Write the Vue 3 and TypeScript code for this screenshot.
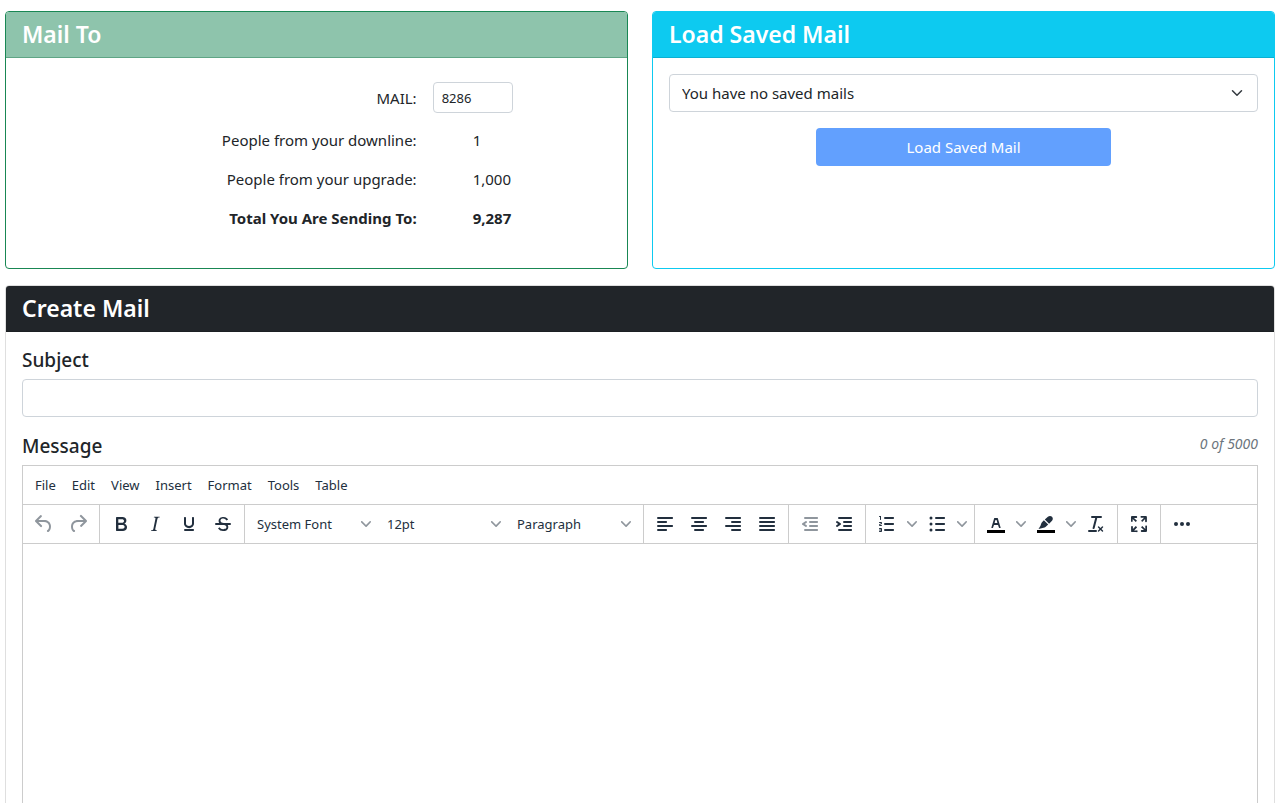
<script setup lang="ts">
import { computed, ref } from 'vue'

interface Tool {
  label: string
  shapes: string[]
  swatch?: boolean
  disabled?: boolean
  split?: boolean
}

interface Picker {
  label: string
  value: string
}

const mailCount = ref('8286')
const downline = 1
const upgrade = 1000
const subject = ref('')
const message = ref('')

const total = computed(() => (Number(mailCount.value) || 0) + downline + upgrade)
const format = (value: number): string => value.toLocaleString('en-US')

const menus: string[] = ['File', 'Edit', 'View', 'Insert', 'Format', 'Tools', 'Table']

const pickers: Picker[] = [
  { label: 'Font family', value: 'System Font' },
  { label: 'Font size', value: '12pt' },
  { label: 'Block format', value: 'Paragraph' },
]

const bar = (x: number, y: number, width: number): string =>
  `M${x} ${y}h${width}c.6 0 1 .4 1 1s-.4 1-1 1H${x}a1 1 0 110-2z`

const dot = (x: number, y: number, r: number): string =>
  `M${x - r} ${y}a${r} ${r} 0 1 0 ${r * 2} 0a${r} ${r} 0 1 0 ${-r * 2} 0z`

const leadGroups: Tool[][] = [
  [
    {
      label: 'Undo',
      disabled: true,
      shapes: ['M6.4 8H12c3.7 0 6.2 2 6.8 5.1.6 2.7-.4 5.6-2.3 6.8a1 1 0 01-1-1.8c1.1-.6 1.8-2.7 1.4-4.6-.5-2.1-2.1-3.5-4.9-3.5H6.4l3.3 3.3a1 1 0 11-1.4 1.4l-5-5a1 1 0 010-1.4l5-5a1 1 0 011.4 1.4L6.4 8z'],
    },
    {
      label: 'Redo',
      disabled: true,
      shapes: ['M17.6 10H12c-2.8 0-4.4 1.4-4.9 3.5-.4 2 .3 4 1.4 4.6a1 1 0 11-1 1.8c-2-1.2-2.9-4.1-2.3-6.8.6-3 3-5.1 6.8-5.1h5.6l-3.3-3.3a1 1 0 111.4-1.4l5 5a1 1 0 010 1.4l-5 5a1 1 0 01-1.4-1.4l3.3-3.3z'],
    },
  ],
  [
    {
      label: 'Bold',
      shapes: ['M7.8 19c-.3 0-.5 0-.6-.2l-.2-.5V5.7c0-.2 0-.4.2-.5l.6-.2h5c1.5 0 2.7.3 3.5 1 .7.6 1.1 1.4 1.1 2.5a3 3 0 01-.6 1.9c-.4.6-1 1-1.6 1.2.4.1.9.3 1.3.6s.8.7 1 1.2c.4.4.5 1 .5 1.6 0 1.3-.4 2.3-1.3 3-.8.7-2.1 1-3.8 1H7.8zm5-8.3c.6 0 1.2-.1 1.6-.5.4-.3.6-.7.6-1.3 0-1.1-.8-1.7-2.3-1.7H9.3v3.5h3.4zm.5 6c.7 0 1.3-.1 1.7-.4.4-.4.6-.9.6-1.5s-.2-1-.7-1.4c-.4-.3-1-.4-2-.4H9.4v3.8h4z'],
    },
    {
      label: 'Italic',
      shapes: ['M16.7 4.7l-.1.9h-.3c-.6 0-1 0-1.4.3-.3.3-.4.6-.5 1.1l-2.1 9.8v.6c0 .5.4.8 1.4.8h.2l-.2.8H8l.2-.8h.2c1.1 0 1.8-.5 2-1.5l2-9.8.1-.5c0-.6-.4-.8-1.4-.8h-.3l.2-.9h5.8z'],
    },
    {
      label: 'Underline',
      shapes: ['M16 5c.6 0 1 .4 1 1v5.5a4 4 0 01-.4 1.8l-1 1.4a5.3 5.3 0 01-5.5 1 5 5 0 01-1.6-1c-.5-.4-.8-.9-1.1-1.4a4 4 0 01-.4-1.8V6c0-.6.4-1 1-1s1 .4 1 1v5.5c0 .3 0 .6.2 1l.6.7a3.3 3.3 0 002.2.8 3.4 3.4 0 002.2-.8c.3-.2.4-.5.6-.8l.2-.9V6c0-.6.4-1 1-1zM8 17h8c.6 0 1 .4 1 1s-.4 1-1 1H8a1 1 0 010-2z'],
    },
    {
      label: 'Strikethrough',
      shapes: [
        'M15.6 8.5c-.5-.7-1-1.1-1.3-1.3-.6-.4-1.3-.6-2-.6-2.7 0-2.8 1.7-2.8 2.1 0 1.6 1.8 2 3.2 2.3 4.4.9 4.6 2.8 4.6 3.9 0 1.4-.7 4.1-5 4.1A6.2 6.2 0 017 16.4l1.5-1.1c.4.6 1.6 2 3.7 2 1.6 0 2.5-.4 3-1.2.4-.8.3-2-.8-2.6-.7-.4-1.6-.7-2.9-1-1-.2-3.9-.8-3.9-3.6C7.6 6 10.3 5 12.4 5c2.9 0 4.2 1.6 4.7 2.4l-1.5 1.1z',
        'M5 11h14a1 1 0 010 2H5a1 1 0 010-2z',
      ],
    },
  ],
]

const toolGroups: Tool[][] = [
  [
    { label: 'Align left', shapes: [bar(5, 5, 14), bar(5, 9, 8), bar(5, 13, 14), bar(5, 17, 8)] },
    { label: 'Align center', shapes: [bar(5, 5, 14), bar(8, 9, 8), bar(5, 13, 14), bar(8, 17, 8)] },
    { label: 'Align right', shapes: [bar(5, 5, 14), bar(11, 9, 8), bar(5, 13, 14), bar(11, 17, 8)] },
    { label: 'Justify', shapes: [bar(5, 5, 14), bar(5, 9, 14), bar(5, 13, 14), bar(5, 17, 14)] },
  ],
  [
    {
      label: 'Decrease indent',
      disabled: true,
      shapes: [bar(7, 5, 12), bar(12, 9, 7), bar(12, 13, 7), bar(7, 17, 12), 'M8.6 13.2a1 1 0 01-1.2 1.6l-3-2a1 1 0 010-1.6l3-2a1 1 0 011.2 1.6L6.8 12l1.8 1.2z'],
    },
    {
      label: 'Increase indent',
      shapes: [bar(7, 5, 12), bar(12, 9, 7), bar(12, 13, 7), bar(7, 17, 12), 'M4.4 13.2L6.2 12l-1.8-1.2a1 1 0 011.2-1.6l3 2a1 1 0 010 1.6l-3 2a1 1 0 11-1.2-1.6z'],
    },
  ],
  [
    {
      label: 'Numbered list',
      split: true,
      shapes: [
        bar(10, 5, 8),
        bar(10, 11, 8),
        bar(10, 17, 8),
        'M6 4v3.5c0 .3-.2.5-.5.5a.5.5 0 01-.5-.5V5h-.5a.5.5 0 010-1H6zm-1 8.8l.2.2h1.3c.3 0 .5.2.5.5s-.2.5-.5.5H4.9a1 1 0 01-.9-1V13c0-.4.3-.8.6-1l1.2-.4.2-.3a.2.2 0 00-.2-.2H4.5a.5.5 0 01-.5-.5c0-.3.2-.5.5-.5h1.6c.5 0 .9.4.9 1v.1c0 .4-.3.8-.6 1l-1.2.4-.2.3zM7 17v2c0 .6-.4 1-1 1H4.5a.5.5 0 010-1h1.2c.2 0 .3-.1.3-.3 0-.2-.1-.3-.3-.3H4.4a.4.4 0 110-.8h1.3c.2 0 .3-.1.3-.3 0-.2-.1-.3-.3-.3H4.5a.5.5 0 110-1H6c.6 0 1 .4 1 1z',
      ],
    },
    {
      label: 'Bullet list',
      split: true,
      shapes: [bar(11, 5, 8), bar(11, 11, 8), bar(11, 17, 8), dot(6, 6, 1.5), dot(6, 12, 1.5), dot(6, 18, 1.5)],
    },
  ],
  [
    {
      label: 'Text color',
      split: true,
      swatch: true,
      shapes: [
        'M8.7 16h-.8a.5.5 0 01-.5-.6l2.7-9c.1-.3.3-.4.5-.4h2.8c.2 0 .4.1.5.4l2.7 9a.5.5 0 01-.5.6h-.8a.5.5 0 01-.4-.4l-.7-2.2c0-.3-.3-.4-.5-.4h-3.4c-.2 0-.4.1-.5.4l-.7 2.2c0 .3-.2.4-.4.4zm2.6-7.6l-.6 2a.5.5 0 00.5.6h1.6a.5.5 0 00.5-.6l-.6-2c0-.3-.3-.4-.5-.4h-.4c-.2 0-.4.1-.5.4z',
      ],
    },
    {
      label: 'Background color',
      split: true,
      swatch: true,
      shapes: [
        'M9.9 8.3l4.3 4.2-1.9 1.8c-1 1-2.300 1.500-3.700 1.800L4.500 17l2-3.200c.4-1.500.8-2.900 1.700-3.800z',
        'M10.8 7.500L13.900 4.700c1.200-1.100 3-1.100 4.100 0s1.100 2.800 0 4l-2.900 3z',
      ],
    },
    {
      label: 'Clear formatting',
      shapes: ['M13.2 6a1 1 0 010 .2l-2.6 10a1 1 0 01-1 .8h-.2a.8.8 0 01-.8-1l2.6-10H8a1 1 0 110-2h9a1 1 0 010 2h-3.8zM5 18h7a1 1 0 010 2H5a1 1 0 010-2zm13 1.5L16.5 18 15 19.5a.7.7 0 01-1-1l1.5-1.5-1.5-1.5a.7.7 0 011-1l1.5 1.5 1.5-1.5a.7.7 0 011 1L17.5 17l1.5 1.5a.7.7 0 01-1 1z'],
    },
  ],
  [
    {
      label: 'Fullscreen',
      shapes: ['M15.3 10l-1.2-1.3 2.9-3h-2.3a.9.9 0 110-1.7H19c.5 0 .9.4.9.9v4.4a.9.9 0 11-1.8 0V7l-2.9 3zm0 4l3 3v-2.3a.9.9 0 111.7 0V19c0 .5-.4.9-.9.9h-4.4a.9.9 0 110-1.8H17l-3-2.9 1.3-1.2zM10 15.4l-2.9 3h2.3a.9.9 0 110 1.7H5a.9.9 0 01-.9-.9v-4.4a.9.9 0 111.8 0V17l2.9-3 1.2 1.3zM8.7 10L5.7 7v2.3a.9.9 0 01-1.7 0V5c0-.5.4-.9.9-.9h4.4a.9.9 0 010 1.8H7l3 2.9-1.3 1.2z'],
    },
  ],
  [
    {
      label: 'More',
      shapes: [dot(6, 12, 2), dot(12, 12, 2), dot(18, 12, 2)],
    },
  ],
]

const chevron = 'M8.7 2.2c.3-.3.8-.3 1 0 .4.4.4.9 0 1.2L5.7 7.8c-.3.3-.9.3-1.2 0L.2 3.4a.8.8 0 010-1.2c.3-.3.8-.3 1.1 0L5 6l3.7-3.8z'
</script>

<template>
  <main class="page">
    <div class="top">
      <section class="card card-success">
        <h2 class="card-title">Mail To</h2>
        <div class="recipients">
          <div class="row">
            <label for="mail-count">MAIL:</label>
            <input id="mail-count" v-model="mailCount" class="control count" type="text" />
          </div>
          <div class="row">
            <span>People from your downline:</span>
            <span class="value">{{ format(downline) }}</span>
          </div>
          <div class="row">
            <span>People from your upgrade:</span>
            <span class="value">{{ format(upgrade) }}</span>
          </div>
          <div class="row row-total">
            <span>Total You Are Sending To:</span>
            <span class="value">{{ format(total) }}</span>
          </div>
        </div>
      </section>

      <section class="card card-info">
        <h2 class="card-title">Load Saved Mail</h2>
        <form class="saved" @submit.prevent>
          <div class="select-box">
            <select class="control" aria-label="Saved mails">
              <option>You have no saved mails</option>
            </select>
            <svg class="select-arrow" viewBox="0 0 16 16" aria-hidden="true">
              <path d="M2 5l6 6 6-6" />
            </svg>
          </div>
          <button class="load" type="submit" disabled>Load Saved Mail</button>
        </form>
      </section>
    </div>

    <section class="card card-create">
      <h2 class="card-title">Create Mail</h2>
      <div class="compose">
        <label class="field-label" for="subject">Subject</label>
        <input id="subject" v-model="subject" class="control subject" type="text" />
        <div class="message-head">
          <label class="field-label" for="message">Message</label>
          <em class="counter">{{ message.length }} of 5000</em>
        </div>

        <div class="editor">
          <div class="menubar" role="menubar">
            <button v-for="menu in menus" :key="menu" type="button" role="menuitem">{{ menu }}</button>
          </div>
          <div class="toolbar" role="toolbar" aria-label="Formatting">
            <div v-for="(group, index) in leadGroups" :key="index" class="group">
              <button
                v-for="tool in group"
                :key="tool.label"
                class="tool"
                type="button"
                :aria-label="tool.label"
                :disabled="tool.disabled"
              >
                <svg class="icon" viewBox="0 0 24 24" aria-hidden="true">
                  <path v-for="shape in tool.shapes" :key="shape" :d="shape" />
                </svg>
              </button>
            </div>
            <div class="group">
              <div v-for="picker in pickers" :key="picker.label" class="picker">
                <select :aria-label="picker.label">
                  <option>{{ picker.value }}</option>
                </select>
                <svg class="chevron" viewBox="0 0 10 10" aria-hidden="true"><path :d="chevron" /></svg>
              </div>
            </div>
            <div v-for="(group, index) in toolGroups" :key="index" class="group">
              <template v-for="tool in group" :key="tool.label">
                <button class="tool" type="button" :aria-label="tool.label" :disabled="tool.disabled">
                  <svg class="icon" viewBox="0 0 24 24" aria-hidden="true">
                    <path v-if="tool.swatch" class="swatch" d="M3 18h18v3H3z" />
                    <path v-for="shape in tool.shapes" :key="shape" :d="shape" />
                  </svg>
                </button>
                <button v-if="tool.split" class="split" type="button" :aria-label="`${tool.label} options`">
                  <svg class="chevron" viewBox="0 0 10 10" aria-hidden="true"><path :d="chevron" /></svg>
                </button>
              </template>
            </div>
          </div>
          <textarea id="message" v-model="message" class="content" maxlength="5000"></textarea>
        </div>
      </div>
    </section>
  </main>
</template>

<style>
body {
  margin: 0;
  background: #fff;
}
</style>

<style scoped>
.page,
.page * {
  box-sizing: border-box;
}

.page {
  display: flex;
  flex-direction: column;
  gap: 16px;
  height: 100vh;
  padding: 11px 5px 0;
  overflow: hidden;
  color: #212529;
  font-family: 'Noto Sans', 'Open Sans', sans-serif;
  font-size: 15px;
  line-height: 24px;
}

.page button,
.page input,
.page select,
.page textarea {
  margin: 0;
  color: inherit;
  font: inherit;
}

.top {
  display: grid;
  flex: none;
  grid-template-columns: 1fr 1fr;
  gap: 24px;
}

.card {
  border: 1px solid #dfdfdf;
  border-radius: 4px;
  background: #fff;
}

.card-title {
  margin: 0;
  padding: 8px 16px;
  border-bottom: 1px solid rgba(0, 0, 0, 0.125);
  border-radius: 3px 3px 0 0;
  color: #fff;
  font-size: 23px;
  font-weight: 600;
  line-height: 29px;
}

.card-success {
  border-color: #198754;
}

.card-success .card-title {
  border-bottom-color: #5fa585;
  background: #8ec4ac;
}

.card-info {
  border-color: #0dcaf0;
}

.card-info .card-title {
  background: #0dcaf0;
}

.card-create .card-title {
  background: #212529;
}

.recipients {
  display: flex;
  flex-direction: column;
  gap: 15px;
  padding: 24px 16px 38px;
}

.row {
  display: grid;
  grid-template-columns: 67% 1fr;
  gap: 16px;
  align-items: center;
}

.row > :first-child {
  text-align: right;
}

.value {
  padding-left: 40px;
}

.row-total {
  font-weight: 700;
}

.control {
  width: 100%;
  height: 38px;
  padding: 6px 12px;
  border: 1px solid #ced4da;
  border-radius: 4px;
  background: #fff;
}

.page .count {
  width: 80px;
  height: 31px;
  padding: 4px 8px;
  font-size: 13px;
}

.saved {
  display: flex;
  flex-direction: column;
  gap: 16px;
  align-items: center;
  padding: 16px;
}

.select-box {
  display: grid;
  width: 100%;
  align-items: center;
}

.select-box > * {
  grid-area: 1 / 1;
}

select {
  appearance: none;
}

.select-arrow {
  width: 12px;
  height: 12px;
  margin-right: 15px;
  justify-self: end;
  fill: none;
  pointer-events: none;
  stroke: #343a40;
  stroke-linecap: round;
  stroke-linejoin: round;
  stroke-width: 2;
}

.page .load {
  width: 50%;
  height: 38px;
  border: 0;
  border-radius: 4px;
  background: #62a0fe;
  color: #fff;
}

.card-create {
  display: flex;
  flex: 1 0 auto;
  flex-direction: column;
}

.compose {
  display: flex;
  flex: 1;
  flex-direction: column;
  padding: 16px 16px 0;
}

.field-label {
  font-size: 19px;
  font-weight: 500;
}

.page .subject {
  margin: 7px 0 17px;
}

.message-head {
  display: flex;
  justify-content: space-between;
  margin-bottom: 7px;
}

.counter {
  color: #6c757d;
  font-size: 14px;
  line-height: 20px;
}

.editor {
  display: flex;
  flex: 1;
  flex-direction: column;
  border: 1px solid #ccc;
  color: #222f3e;
  font-size: 13px;
}

.menubar,
.toolbar {
  display: flex;
  flex: none;
  height: 39px;
  border-bottom: 1px solid #ccc;
}

.menubar {
  padding: 0 4px;
}

.menubar button,
.tool,
.split {
  border: 0;
  background: transparent;
}

.menubar button {
  padding: 0 8px;
}

.group {
  display: flex;
  padding: 0 4px;
  border-right: 1px solid #ccc;
}

.group:last-child {
  border-right: 0;
}

.tool,
.split {
  display: flex;
  align-items: center;
  justify-content: center;
  padding: 0;
}

.tool {
  width: 34px;
}

.split {
  width: 16px;
}

.icon {
  width: 24px;
  height: 24px;
  fill: #222f3e;
}

.swatch {
  fill: #000;
}

.tool:disabled .icon {
  opacity: 0.5;
}

.chevron {
  width: 10px;
  height: 10px;
  fill: #222f3e;
  opacity: 0.5;
}

.picker {
  display: grid;
  width: 130px;
  align-items: center;
}

.picker > * {
  grid-area: 1 / 1;
}

.picker select {
  width: 100%;
  height: 34px;
  padding: 0 20px 0 8px;
  border: 0;
  background: transparent;
}

.picker .chevron {
  margin-right: 8px;
  justify-self: end;
  pointer-events: none;
}

.content {
  flex: 1;
  min-height: 400px;
  padding: 16px;
  border: 0;
  outline: 0;
  resize: none;
}
</style>
